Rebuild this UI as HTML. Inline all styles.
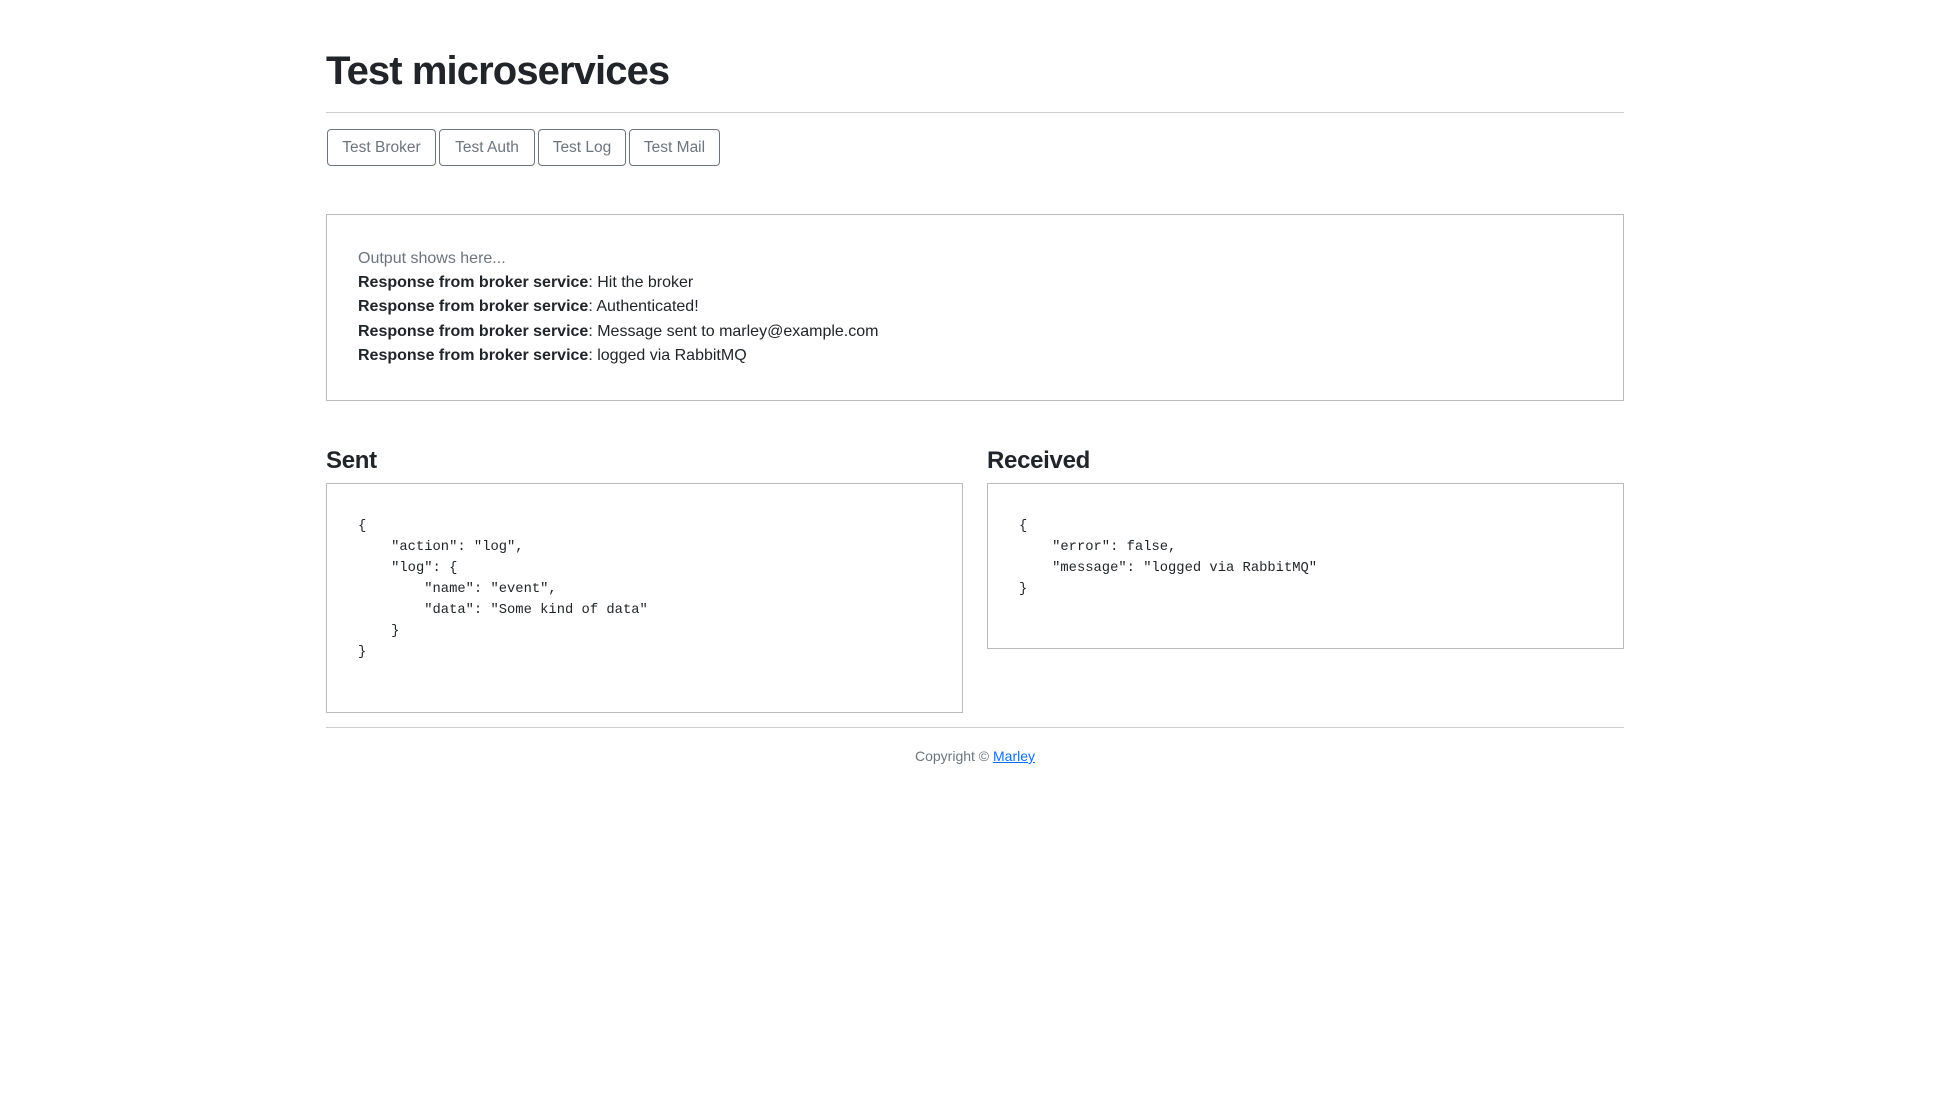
<!DOCTYPE html>
<html><head><meta charset="utf-8"><style>
body{margin:0;background:#fff;font-family:"Liberation Sans",sans-serif;color:#212529;width:1947px;height:1100px;position:relative;overflow:hidden}
.a{position:absolute}
h1{position:absolute;left:326px;top:47px;margin:0;font-size:40px;font-weight:bold;letter-spacing:-0.9px;line-height:48px;color:#212529}
.hr{position:absolute;left:326px;width:1298px;height:1px;background:#ccc}
.btn{position:absolute;top:129px;height:35px;border:1px solid #6c757d;border-radius:4px;color:#6c757d;font-size:15.5px;line-height:36px;text-align:center;box-sizing:content-box}
.box{position:absolute;border:1px solid #bbb;box-sizing:border-box}
.out{font-size:16px;line-height:24.2px;color:#212529}
pre{margin:0;font-family:"Liberation Mono",monospace;font-size:13.8px;line-height:21px;color:#212529}
h3{position:absolute;margin:0;font-size:24px;font-weight:bold;letter-spacing:-0.3px;line-height:30px}
</style></head><body>
<h1>Test microservices</h1>
<div class="hr" style="top:112px"></div>
<div class="btn" style="left:327px;width:107px">Test Broker</div>
<div class="btn" style="left:439px;width:94px">Test Auth</div>
<div class="btn" style="left:538px;width:86px">Test Log</div>
<div class="btn" style="left:629px;width:89px">Test Mail</div>
<div class="box" style="left:326px;top:214px;width:1298px;height:187px"></div>
<div class="a out" style="left:358px;top:247px">
<div style="color:#6c757d">Output shows here...</div>
<div><b>Response from broker service</b>: Hit the broker</div>
<div><b>Response from broker service</b>: Authenticated!</div>
<div><b>Response from broker service</b>: Message sent to marley@example.com</div>
<div><b>Response from broker service</b>: logged via RabbitMQ</div>
</div>
<h3 style="left:326px;top:446px">Sent</h3>
<h3 style="left:987px;top:446px">Received</h3>
<div class="box" style="left:326px;top:483px;width:637px;height:230px"></div>
<div class="box" style="left:987px;top:483px;width:637px;height:166px"></div>
<pre class="a" style="left:358px;top:516px">{
    "action": "log",
    "log": {
        "name": "event",
        "data": "Some kind of data"
    }
}</pre>
<pre class="a" style="left:1019px;top:516px">{
    "error": false,
    "message": "logged via RabbitMQ"
}</pre>
<div class="hr" style="top:727px"></div>
<div class="a" style="left:326px;width:1298px;top:748px;text-align:center;font-size:14px;color:#6c757d">Copyright © <span style="color:#0d6efd;text-decoration:underline">Marley</span></div>
</body></html>
